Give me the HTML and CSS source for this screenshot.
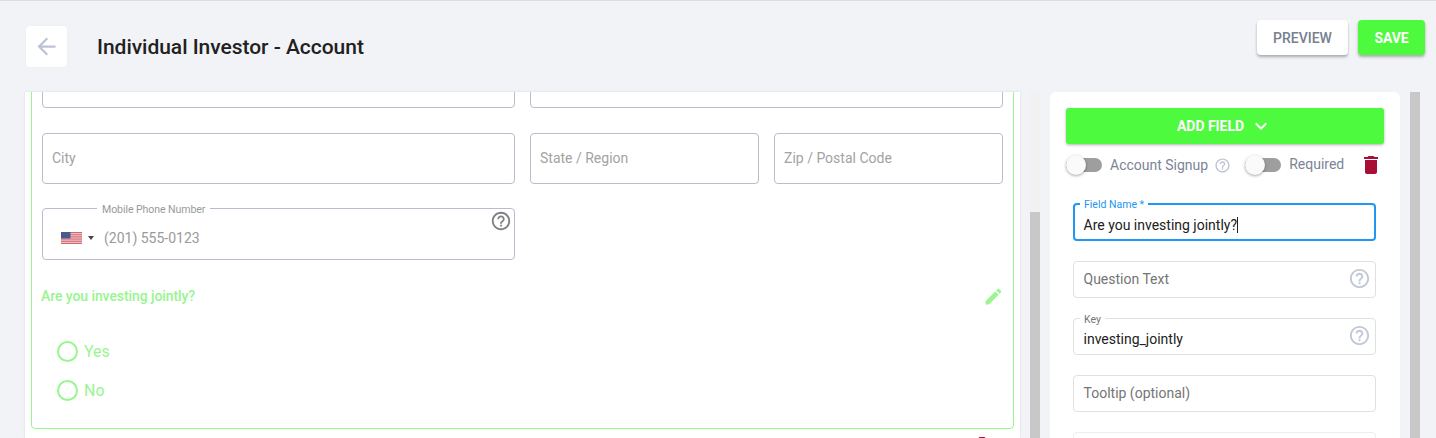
FILE: index.html
```html
<!DOCTYPE html>
<html lang="en">
<head>
<meta charset="utf-8">
<title>Individual Investor - Account</title>
<link rel="stylesheet" href="styles.css">
</head>
<body>
<div class="app">
  <header class="topbar">
    <div class="topbar-left">
      <button class="back" aria-label="Back">
        <svg viewBox="0 0 24 24" width="27" height="27"><path d="M20 11H7.83l5.59-5.59L12 4l-8 8 8 8 1.41-1.41L7.83 13H20z"/></svg>
      </button>
      <h1 class="title">Individual Investor - Account</h1>
    </div>
    <div class="actions">
      <button class="btn btn-preview">PREVIEW</button>
      <button class="btn btn-save">SAVE</button>
    </div>
  </header>
  <main class="workspace">
    <section class="form-card">
      <div class="form-scroll">
        <div class="selected-group">
          <div class="row">
            <div class="box"></div>
            <div class="box"></div>
          </div>
          <div class="row">
            <div class="box"><span class="ph">City</span></div>
            <div class="half">
              <div class="box"><span class="ph">State / Region</span></div>
              <div class="box"><span class="ph">Zip / Postal Code</span></div>
            </div>
          </div>
          <div class="row">
            <div class="phone">
              <span class="phone-label">Mobile Phone Number</span>
              <svg class="flag" viewBox="0 0 21 12" width="21" height="12" preserveAspectRatio="none">
                <rect width="21" height="12" fill="#f3d6d8"/>
                <path d="M0 .5h21M0 2.3h21M0 4.2h21M0 6h21M0 7.9h21M0 9.7h21M0 11.5h21" stroke="#d2656f" stroke-width="1"/>
                <rect width="9.5" height="6.5" fill="#4b5a8c"/>
              </svg>
              <span class="caret"></span>
              <span class="phone-ph">(201) 555-0123</span>
              <svg class="help help-dark" viewBox="0 0 24 24" width="22" height="22"><path d="M11 18h2v-2h-2v2zm1-16C6.48 2 2 6.48 2 12s4.48 10 10 10 10-4.48 10-10S17.52 2 12 2zm0 18c-4.41 0-8-3.59-8-8s3.59-8 8-8 8 3.59 8 8-3.59 8-8 8zm0-14c-2.21 0-4 1.79-4 4h2c0-1.1.9-2 2-2s2 .9 2 2c0 2-3 1.75-3 5h2c0-2.25 3-2.5 3-5 0-2.21-1.79-4-4-4z"/></svg>
            </div>
          </div>
          <div class="question">
            <span class="question-text">Are you investing jointly?</span>
            <svg class="pencil" viewBox="0 0 24 24" width="21" height="21"><path d="M3 17.25V21h3.75L17.81 9.94l-3.75-3.75L3 17.25zM20.71 7.04a1 1 0 0 0 0-1.41l-2.34-2.34a1 1 0 0 0-1.41 0l-1.83 1.83 3.75 3.75 1.83-1.83z"/></svg>
          </div>
          <ul class="radios">
            <li class="radio"><span class="dot"></span>Yes</li>
            <li class="radio"><span class="dot"></span>No</li>
          </ul>
        </div>
        <div class="group-tools">
          <svg class="trash" viewBox="0 0 24 24" width="24" height="24"><path d="M6 19c0 1.1.9 2 2 2h8c1.1 0 2-.9 2-2V7H6v12zM19 4h-3.5l-1-1h-5l-1 1H5v2h14V4z"/></svg>
        </div>
      </div>
    </section>
    <div class="scrollbar scrollbar-left"><div class="thumb"></div></div>
    <aside class="panel">
      <button class="add-field">ADD FIELD
        <svg viewBox="0 0 24 24" width="24" height="24"><path d="M7.41 8.59 12 13.17l4.59-4.58L18 10l-6 6-6-6z"/></svg>
      </button>
      <div class="toggles">
        <span class="switch"><span class="knob"></span></span>
        <span class="toggle-label">Account Signup</span>
        <svg class="help help-small" viewBox="0 0 24 24" width="17" height="17"><path d="M11 18h2v-2h-2v2zm1-16C6.48 2 2 6.48 2 12s4.48 10 10 10 10-4.48 10-10S17.52 2 12 2zm0 18c-4.41 0-8-3.59-8-8s3.59-8 8-8 8 3.59 8 8-3.59 8-8 8zm0-14c-2.21 0-4 1.79-4 4h2c0-1.1.9-2 2-2s2 .9 2 2c0 2-3 1.75-3 5h2c0-2.25 3-2.5 3-5 0-2.21-1.79-4-4-4z"/></svg>
        <span class="switch switch-2"><span class="knob"></span></span>
        <span class="toggle-label toggle-req">Required</span>
        <svg class="trash trash-panel" viewBox="0 0 24 24" width="24" height="24"><path d="M6 19c0 1.1.9 2 2 2h8c1.1 0 2-.9 2-2V7H6v12zM19 4h-3.5l-1-1h-5l-1 1H5v2h14V4z"/></svg>
      </div>
      <div class="fields">
        <div class="field focused">
          <span class="float-label">Field Name *</span>
          <span class="value">Are you investing jointly?<span class="cursor"></span></span>
        </div>
        <div class="field">
          <span class="ph-panel">Question Text</span>
          <svg class="help help-field" viewBox="0 0 24 24" width="23" height="23"><path d="M11 18h2v-2h-2v2zm1-16C6.48 2 2 6.48 2 12s4.48 10 10 10 10-4.48 10-10S17.52 2 12 2zm0 18c-4.41 0-8-3.59-8-8s3.59-8 8-8 8 3.59 8 8-3.59 8-8 8zm0-14c-2.21 0-4 1.79-4 4h2c0-1.1.9-2 2-2s2 .9 2 2c0 2-3 1.75-3 5h2c0-2.25 3-2.5 3-5 0-2.21-1.79-4-4-4z"/></svg>
        </div>
        <div class="field">
          <span class="float-label muted">Key</span>
          <span class="value">investing_jointly</span>
          <svg class="help help-field" viewBox="0 0 24 24" width="23" height="23"><path d="M11 18h2v-2h-2v2zm1-16C6.48 2 2 6.48 2 12s4.48 10 10 10 10-4.48 10-10S17.52 2 12 2zm0 18c-4.41 0-8-3.59-8-8s3.59-8 8-8 8 3.59 8 8-3.59 8-8 8zm0-14c-2.21 0-4 1.79-4 4h2c0-1.1.9-2 2-2s2 .9 2 2c0 2-3 1.75-3 5h2c0-2.25 3-2.5 3-5 0-2.21-1.79-4-4-4z"/></svg>
        </div>
        <div class="field">
          <span class="ph-panel">Tooltip (optional)</span>
        </div>
        <div class="field field-faint"></div>
      </div>
    </aside>
    <div class="scrollbar scrollbar-right"></div>
  </main>
</div>
</body>
</html>
```

FILE: styles.css
```css
* { box-sizing: border-box; }
html, body { margin: 0; height: 100%; overflow: hidden; }
body { background: #f1f3f7; font-family: Roboto, "Liberation Sans", sans-serif; color: #212121; }
button { font-family: inherit; border: 0; cursor: pointer; }

.app { height: 438px; display: flex; flex-direction: column; border-top: 1px solid #dcdee3; overflow: hidden; }

.topbar { height: 91px; flex: none; display: flex; justify-content: space-between; padding: 19px 11px 0 26px; }
.topbar-left { display: flex; align-items: flex-start; gap: 30px; }
.back { width: 41px; height: 41px; margin-top: 6px; padding: 0; background: #fff; border-radius: 4px; display: flex; align-items: center; justify-content: center; box-shadow: 0 0 1px rgba(0,0,0,.08); }
.back svg { fill: #bcc3d6; }
.title { margin: 13px 0 0; font-size: 21px; font-weight: 500; color: #212121; line-height: 28px; letter-spacing: -.03px; }

.actions { display: flex; gap: 10px; height: 35px; background: linear-gradient(#f7f8fa, #f7f8fa) center / 20px 100% no-repeat; }
.btn { height: 35px; border-radius: 4px; font-size: 14px; font-weight: 500; box-shadow: 0 2px 3px rgba(0,0,0,.3); }
.btn-preview { width: 91px; background: #fff; color: #76808f; }
.btn-save { width: 67px; background: #4dfa3d; color: #fff; font-weight: 700; letter-spacing: -.1px; }

.workspace { flex: 1; min-height: 0; display: flex; align-items: stretch; padding-left: 25px; }

.form-card { width: 995px; flex: none; background: #fff; overflow: hidden; box-shadow: 0 0 2px rgba(0,0,0,.12); }
.form-scroll { margin: -48px 6px 0; }
.selected-group { height: 385px; border: 1px solid #98f590; border-radius: 4px; padding: 13px 10px 0; }

.row { display: grid; grid-template-columns: 1fr 1fr; gap: 15px; margin-bottom: 25px; }
.half { display: grid; grid-template-columns: 1fr 1fr; gap: 15px; }
.box { height: 51px; border: 1px solid #b9bccb; border-radius: 4px; display: flex; align-items: center; padding: 0 0 2px 9px; }
.row:first-child .box { height: 50px; }
.row:nth-child(2) { margin-bottom: 24px; }
.ph { font-size: 14px; color: #a3a3a3; }

.phone { position: relative; height: 52px; border: 1px solid #b9bccb; border-radius: 4px; display: flex; align-items: center; padding: 7px 0 0 18px; }
.phone-label { position: absolute; top: -5px; left: 54px; padding: 0 5px; background: #fff; font-size: 10.6px; letter-spacing: -.1px; line-height: 12px; color: #9a9a9a; }
.flag { flex: none; }
.caret { width: 0; height: 0; margin-left: 6px; border: 3px solid transparent; border-top: 4px solid #444; border-bottom: 0; }
.phone-ph { margin-left: 10px; font-size: 14px; color: #9a9a9a; }
.help-dark { position: absolute; top: 1px; right: 2px; fill: #808080; }

.question { display: flex; justify-content: space-between; align-items: center; margin-top: -2px; height: 26px; color: #98f590; }
.question-text { font-size: 14px; font-weight: 500; line-height: 20px; margin-left: -1px; letter-spacing: -.08px; }
.pencil { fill: #98f590; margin-right: -1px; }

.radios { list-style: none; margin: 32px 0 0 15px; padding: 0; display: flex; flex-direction: column; gap: 18px; }
.radio { display: flex; align-items: center; gap: 6px; height: 21px; font-size: 16px; color: #98f590; }
.dot { width: 21px; height: 21px; border: 2px solid #98f590; border-radius: 50%; }

.group-tools { display: flex; justify-content: flex-end; margin-top: 5px; padding-right: 20px; }

.scrollbar { width: 10px; flex: none; margin-left: 10px; }
.scrollbar-left { background: #f1f1f1; padding-top: 120px; }
.thumb { height: 100%; background: #c8c8c8; }
.scrollbar-right { background: #c8c8c8; }

.panel { width: 350px; flex: none; margin-left: 10px; background: #fff; border-radius: 6px 6px 0 0; padding: 16px 16px 0; overflow: hidden; }
.add-field { width: 100%; height: 36px; background: #4dfa3d; color: #fff; border-radius: 3px; font-size: 14px; font-weight: 700; letter-spacing: -.05px; display: flex; align-items: center; justify-content: center; gap: 5px; box-shadow: 0 1px 3px rgba(0,0,0,.3); }
.add-field svg { fill: #fff; }

.toggles { display: flex; align-items: center; height: 22px; margin-top: 10px; }
.switch { position: relative; width: 36px; height: 14px; flex: none; background: #9e9e9e; border-radius: 7px; }
.switch-2 { margin-left: 14px; }
.knob { position: absolute; left: 0; top: -3px; width: 20px; height: 20px; border-radius: 50%; background: #fafafa; box-shadow: 0 1px 3px rgba(0,0,0,.35); }
.toggle-label { margin-left: 8px; font-size: 14px; color: #7c8496; }
.toggle-req { margin-top: -2px; }
.help-small { margin-left: 6px; fill: #bcc3d6; }
.trash { fill: #a80f37; flex: none; }
.trash-panel { margin-left: 15px; }

.fields { display: flex; flex-direction: column; gap: 20px; margin: 27px 8px 0 7px; }
.field { position: relative; height: 37px; flex: none; border: 1px solid #e0e0e0; border-radius: 4px; display: flex; align-items: center; padding-left: 9.5px; font-size: 14px; }
.field.focused { height: 38px; border: 2px solid #2196f3; padding-left: 8.5px; }
.field-faint { border-color: #eeeeee; }
.float-label { position: absolute; top: -5px; left: 6px; padding: 0 4px; background: #fff; font-size: 10.5px; line-height: 12px; color: #2196f3; }
.focused .float-label { left: 5px; top: -6px; }
.float-label.muted { color: #757575; }
.value { color: #212121; position: relative; top: 2px; }
.focused .value { top: 3px; }
.cursor { display: inline-block; width: 1px; height: 16px; background: #212121; vertical-align: -3px; }
.ph-panel { color: #757575; position: relative; top: -1px; }
.help-field { position: absolute; right: 4px; top: 5px; fill: #c3c8d6; }
```
